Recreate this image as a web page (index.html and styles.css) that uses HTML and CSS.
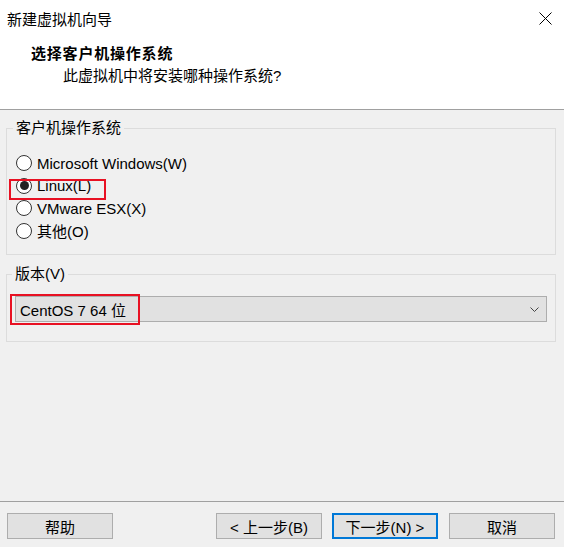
FILE: index.html
```html
<!DOCTYPE html>
<html lang="zh-CN">
<head>
<meta charset="utf-8">
<title>新建虚拟机向导</title>
<link rel="stylesheet" href="styles.css">
</head>
<body>
<div class="window">
  <header class="header">
    <div class="titlebar">
      <span class="title">新建虚拟机向导</span>
      <svg class="close" width="13" height="13" viewBox="0 0 13 13"><path d="M0.5 0.5 L12.5 12.5 M12.5 0.5 L0.5 12.5" stroke="#000" stroke-width="1" fill="none"/></svg>
    </div>
    <div class="heading">选择客户机操作系统</div>
    <div class="subheading">此虚拟机中将安装哪种操作系统?</div>
  </header>
  <main class="content">
    <fieldset class="group os-group">
      <legend>客户机操作系统</legend>
      <div class="radio-row"><span class="radio"></span><span>Microsoft Windows(W)</span></div>
      <div class="radio-row"><span class="radio checked"></span><span>Linux(L)</span><span class="mark mark-linux"></span></div>
      <div class="radio-row"><span class="radio"></span><span>VMware ESX(X)</span></div>
      <div class="radio-row"><span class="radio"></span><span>其他(O)</span></div>
    </fieldset>
    <fieldset class="group version-group">
      <legend>版本(V)</legend>
      <div class="select">
        <span class="select-value">CentOS 7 64 位</span>
        <svg class="chevron" width="9" height="5" viewBox="0 0 9 5"><path d="M0.5 0.5 L4.5 4.5 L8.5 0.5" stroke="#444" stroke-width="1" fill="none"/></svg>
        <span class="mark mark-version"></span>
      </div>
    </fieldset>
  </main>
  <footer class="footer">
    <button class="btn">帮助</button>
    <div class="spacer"></div>
    <button class="btn back">&lt; 上一步(B)</button>
    <button class="btn primary">下一步(N) &gt;</button>
    <button class="btn">取消</button>
  </footer>
</div>
</body>
</html>
```
FILE: styles.css
```css
* { box-sizing: border-box; }
html, body { margin: 0; padding: 0; }
body {
  background: #f0f0f0;
  font-family: "Liberation Sans", "Noto Sans CJK SC", sans-serif;
  font-size: 15px;
  color: #000;
}
.window {
  width: 564px;
  height: 547px;
  display: flex;
  flex-direction: column;
}
.header {
  background: #fff;
  height: 110px;
  border-bottom: 1px solid #a0a0a0;
}
.titlebar {
  height: 36px;
  display: flex;
  align-items: center;
  justify-content: space-between;
  padding: 0 12px 0 7px;
}
.close { display: block; margin-top: 1px; }
.heading {
  padding-left: 31px;
  line-height: 22px;
  font-weight: bold;
  letter-spacing: 0.8px;
  margin-top: 7px;
}
.subheading {
  padding-left: 63px;
  line-height: 22px;
}
.content {
  flex: 1;
  padding: 9px 8px 0 6px;
}
.group {
  margin: 0;
  border: 1px solid #dcdcdc;
  min-width: 0;
}
.group legend {
  padding: 0 3px;
  margin-left: -3px;
  line-height: 18px;
}
.os-group {
  padding: 15px 9px 12px 9px;
}
.radio-row {
  position: relative;
  height: 22.5px;
  display: flex;
  align-items: center;
  gap: 5px;
}
.radio {
  width: 16px;
  height: 16px;
  border: 1px solid #333;
  border-radius: 50%;
  background: #fff;
  display: flex;
  align-items: center;
  justify-content: center;
  flex: none;
}
.radio.checked::after {
  content: "";
  width: 9px;
  height: 9px;
  border-radius: 50%;
  background: #222;
}
.mark {
  position: absolute;
  border: 2px solid #e81123;
}
.mark-linux {
  left: -7px;
  top: 4px;
  width: 97px;
  height: 21px;
}
.version-group {
  margin-top: 10px;
  padding: 13px 8px 19px 8px;
}
.select {
  position: relative;
  height: 26px;
  border: 1px solid #adadad;
  background: #e1e1e1;
  display: flex;
  align-items: center;
  justify-content: space-between;
  padding: 0 7px 0 4px;
}
.chevron { display: block; }
.mark-version {
  left: -6px;
  top: -3px;
  width: 130px;
  height: 31px;
}
.footer {
  height: 46px;
  border-top: 1px solid #a0a0a0;
  display: flex;
  align-items: flex-start;
  gap: 11px;
  padding: 11px 9px 0 7px;
}
.spacer { flex: 1; }
.btn {
  width: 106px;
  height: 26px;
  border: 1px solid #adadad;
  background: #e1e1e1;
  font-family: inherit;
  font-size: 15px;
  color: #000;
  padding: 0;
  margin: 0;
}
.btn.back { margin-right: -1px; }
.btn.primary {
  border: 2px solid #0078d7;
}
```
